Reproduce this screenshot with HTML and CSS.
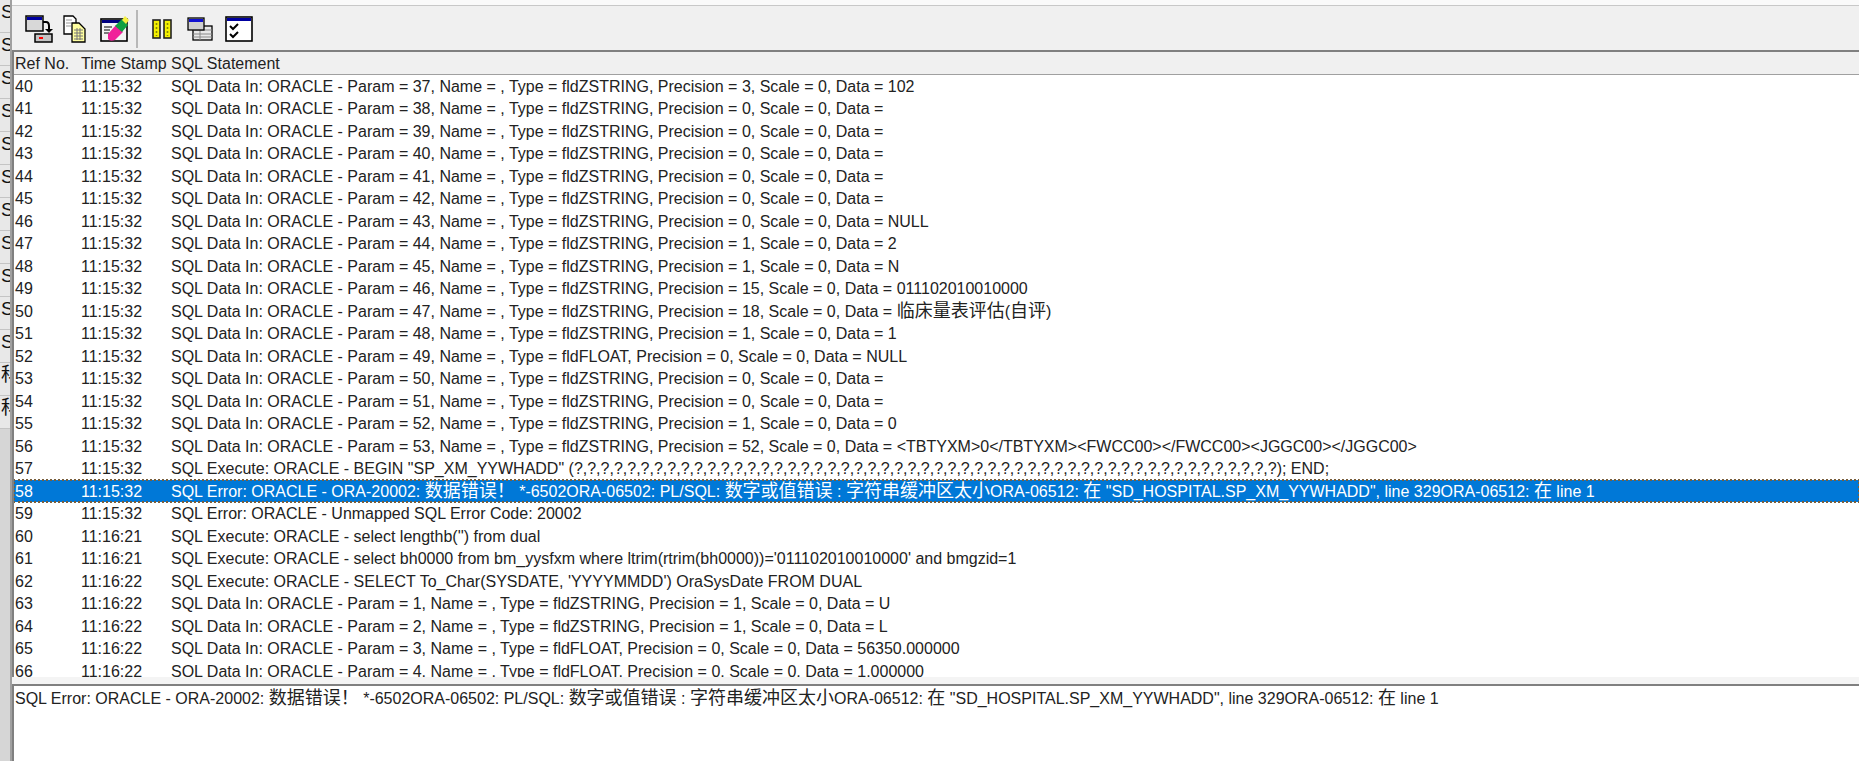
FILE: index.html
```html
<!DOCTYPE html>
<html lang="en">
<head>
<meta charset="utf-8">
<title>SQL Monitor</title>
<link rel="stylesheet" href="styles.css">
</head>
<body>
<div class="app">
  <div class="side">
    <span>S</span><span>S</span><span>S</span><span>S</span><span>S</span><span>S</span><span>S</span><span>S</span><span>S</span><span>S</span><span>S</span><span>科</span><span>科</span>
  </div>
  <div class="main">
    <div class="toolbar">
      <svg class="icon i1" viewBox="0 0 28 28"><rect x="1" y="1" width="17" height="15" fill="#d8d8d8" stroke="#000" stroke-width="1.5"/><rect x="2" y="2" width="15" height="3" fill="#0000a0"/><path d="M18 7h3q3 0 3 4v4" fill="none" stroke="#000" stroke-width="2"/><path d="M20 14h8l-4 4z" fill="#000"/><rect x="10" y="19" width="17" height="8" fill="#c4c4c4" stroke="#000" stroke-width="1.5"/><rect x="14" y="22" width="4" height="2" fill="#f00"/></svg>
      <svg class="icon i2" viewBox="0 0 24 28"><path d="M1 1h9l3 3v15H1z" fill="#fff" stroke="#000" stroke-width="1.3"/><path d="M3 5h6M3 8h5M3 11h5" stroke="#999"/><path d="M9 8h7l6 6v13H9z" fill="#ffffa0" stroke="#000" stroke-width="1.3"/><path d="M11 15h9M11 18h9M11 21h9M11 24h9M14 13v12M17 13v12" stroke="#777" stroke-width="1"/></svg>
      <svg class="icon i3" viewBox="0 0 30 28"><rect x="1" y="4" width="26" height="22" fill="#f4f4f4" stroke="#000" stroke-width="1.6"/><rect x="2" y="5" width="24" height="3" fill="#000080"/><path d="M4 12h8M4 15h6M4 18h5" stroke="#000" stroke-width="1.2"/><path d="M8 19l8-9 7 7-8 8q-5 2-7-1z" fill="#f0209a"/><path d="M15 11l7-7 6 6-6 7z" fill="#10a040"/><path d="M22 5l3-4 4 4-3 4z" fill="#f4f040"/></svg>
      <i class="sep"></i>
      <svg class="icon i4" viewBox="0 0 20 20"><rect x="1" y="1" width="7" height="18" fill="#f4f000" stroke="#222" stroke-width="1.6"/><rect x="12" y="1" width="7" height="18" fill="#f4f000" stroke="#222" stroke-width="1.6"/><path d="M4.500 4v13M15.500 4v13" stroke="#8a8a00" stroke-width="1.600" stroke-dasharray="2 2"/></svg>
      <svg class="icon i5" viewBox="0 0 26 24"><rect x="6" y="9" width="19" height="14" fill="#e8e8e8" stroke="#000" stroke-width="1.300"/><path d="M6 13h19M6 17h19M6 20h19M13 9v14" stroke="#888"/><rect x="1" y="1" width="16" height="12" fill="#cfcfcf" stroke="#000" stroke-width="1.300"/><rect x="2" y="2" width="14" height="3" fill="#1010d0"/></svg>
      <svg class="icon i6" viewBox="0 0 28 26"><rect x="1" y="1" width="26" height="24" fill="#fff" stroke="#000" stroke-width="1.600"/><rect x="2" y="2" width="24" height="3" fill="#0000a0"/><path d="M5 10l3 3 5-5M5 18l3 3 5-5" fill="none" stroke="#000" stroke-width="2"/></svg>
    </div>
    <div class="list">
      <div class="row head"><span class="c1">Ref No.</span><span class="c2">Time Stamp</span><span class="c3">SQL Statement</span></div>
      <div class="row"><span class="c1">40</span><span class="c2">11:15:32</span><span class="c3">SQL Data In: ORACLE - Param = 37, Name = , Type = fldZSTRING, Precision = 3, Scale = 0, Data = 102</span></div>
      <div class="row"><span class="c1">41</span><span class="c2">11:15:32</span><span class="c3">SQL Data In: ORACLE - Param = 38, Name = , Type = fldZSTRING, Precision = 0, Scale = 0, Data = </span></div>
      <div class="row"><span class="c1">42</span><span class="c2">11:15:32</span><span class="c3">SQL Data In: ORACLE - Param = 39, Name = , Type = fldZSTRING, Precision = 0, Scale = 0, Data = </span></div>
      <div class="row"><span class="c1">43</span><span class="c2">11:15:32</span><span class="c3">SQL Data In: ORACLE - Param = 40, Name = , Type = fldZSTRING, Precision = 0, Scale = 0, Data = </span></div>
      <div class="row"><span class="c1">44</span><span class="c2">11:15:32</span><span class="c3">SQL Data In: ORACLE - Param = 41, Name = , Type = fldZSTRING, Precision = 0, Scale = 0, Data = </span></div>
      <div class="row"><span class="c1">45</span><span class="c2">11:15:32</span><span class="c3">SQL Data In: ORACLE - Param = 42, Name = , Type = fldZSTRING, Precision = 0, Scale = 0, Data = </span></div>
      <div class="row"><span class="c1">46</span><span class="c2">11:15:32</span><span class="c3">SQL Data In: ORACLE - Param = 43, Name = , Type = fldZSTRING, Precision = 0, Scale = 0, Data = NULL</span></div>
      <div class="row"><span class="c1">47</span><span class="c2">11:15:32</span><span class="c3">SQL Data In: ORACLE - Param = 44, Name = , Type = fldZSTRING, Precision = 1, Scale = 0, Data = 2</span></div>
      <div class="row"><span class="c1">48</span><span class="c2">11:15:32</span><span class="c3">SQL Data In: ORACLE - Param = 45, Name = , Type = fldZSTRING, Precision = 1, Scale = 0, Data = N</span></div>
      <div class="row"><span class="c1">49</span><span class="c2">11:15:32</span><span class="c3">SQL Data In: ORACLE - Param = 46, Name = , Type = fldZSTRING, Precision = 15, Scale = 0, Data = 011102010010000</span></div>
      <div class="row"><span class="c1">50</span><span class="c2">11:15:32</span><span class="c3">SQL Data In: ORACLE - Param = 47, Name = , Type = fldZSTRING, Precision = 18, Scale = 0, Data = <span class="cjk">临床量表评估</span>(<span class="cjk">自评</span>)</span></div>
      <div class="row"><span class="c1">51</span><span class="c2">11:15:32</span><span class="c3">SQL Data In: ORACLE - Param = 48, Name = , Type = fldZSTRING, Precision = 1, Scale = 0, Data = 1</span></div>
      <div class="row"><span class="c1">52</span><span class="c2">11:15:32</span><span class="c3">SQL Data In: ORACLE - Param = 49, Name = , Type = fldFLOAT, Precision = 0, Scale = 0, Data = NULL</span></div>
      <div class="row"><span class="c1">53</span><span class="c2">11:15:32</span><span class="c3">SQL Data In: ORACLE - Param = 50, Name = , Type = fldZSTRING, Precision = 0, Scale = 0, Data = </span></div>
      <div class="row"><span class="c1">54</span><span class="c2">11:15:32</span><span class="c3">SQL Data In: ORACLE - Param = 51, Name = , Type = fldZSTRING, Precision = 0, Scale = 0, Data = </span></div>
      <div class="row"><span class="c1">55</span><span class="c2">11:15:32</span><span class="c3">SQL Data In: ORACLE - Param = 52, Name = , Type = fldZSTRING, Precision = 1, Scale = 0, Data = 0</span></div>
      <div class="row"><span class="c1">56</span><span class="c2">11:15:32</span><span class="c3">SQL Data In: ORACLE - Param = 53, Name = , Type = fldZSTRING, Precision = 52, Scale = 0, Data = &lt;TBTYXM&gt;0&lt;/TBTYXM&gt;&lt;FWCC00&gt;&lt;/FWCC00&gt;&lt;JGGC00&gt;&lt;/JGGC00&gt;</span></div>
      <div class="row"><span class="c1">57</span><span class="c2">11:15:32</span><span class="c3">SQL Execute: ORACLE - BEGIN "SP_XM_YYWHADD" (?,?,?,?,?,?,?,?,?,?,?,?,?,?,?,?,?,?,?,?,?,?,?,?,?,?,?,?,?,?,?,?,?,?,?,?,?,?,?,?,?,?,?,?,?,?,?,?,?,?,?,?,?); END;</span></div>
      <div class="row sel"><span class="c1">58</span><span class="c2">11:15:32</span><span class="c3">SQL Error: ORACLE - ORA-20002: <span class="cjk">数据错误！</span> *-6502ORA-06502: PL/SQL: <span class="cjk">数字或值错误</span> : <span class="cjk">字符串缓冲区太小</span>ORA-06512: <span class="cjk">在</span> "SD_HOSPITAL.SP_XM_YYWHADD", line 329ORA-06512: <span class="cjk">在</span> line 1</span></div>
      <div class="row"><span class="c1">59</span><span class="c2">11:15:32</span><span class="c3">SQL Error: ORACLE - Unmapped SQL Error Code: 20002</span></div>
      <div class="row"><span class="c1">60</span><span class="c2">11:16:21</span><span class="c3">SQL Execute: ORACLE - select lengthb('') from dual</span></div>
      <div class="row"><span class="c1">61</span><span class="c2">11:16:21</span><span class="c3">SQL Execute: ORACLE - select bh0000 from bm_yysfxm where ltrim(rtrim(bh0000))='011102010010000' and bmgzid=1</span></div>
      <div class="row"><span class="c1">62</span><span class="c2">11:16:22</span><span class="c3">SQL Execute: ORACLE - SELECT To_Char(SYSDATE, 'YYYYMMDD') OraSysDate FROM DUAL</span></div>
      <div class="row"><span class="c1">63</span><span class="c2">11:16:22</span><span class="c3">SQL Data In: ORACLE - Param = 1, Name = , Type = fldZSTRING, Precision = 1, Scale = 0, Data = U</span></div>
      <div class="row"><span class="c1">64</span><span class="c2">11:16:22</span><span class="c3">SQL Data In: ORACLE - Param = 2, Name = , Type = fldZSTRING, Precision = 1, Scale = 0, Data = L</span></div>
      <div class="row"><span class="c1">65</span><span class="c2">11:16:22</span><span class="c3">SQL Data In: ORACLE - Param = 3, Name = , Type = fldFLOAT, Precision = 0, Scale = 0, Data = 56350.000000</span></div>
      <div class="row"><span class="c1">66</span><span class="c2">11:16:22</span><span class="c3">SQL Data In: ORACLE - Param = 4, Name = , Type = fldFLOAT, Precision = 0, Scale = 0, Data = 1.000000</span></div>
    </div>
    <div class="split"></div>
    <div class="detail">SQL Error: ORACLE - ORA-20002: <span class="cjk">数据错误！</span> *-6502ORA-06502: PL/SQL: <span class="cjk">数字或值错误</span> : <span class="cjk">字符串缓冲区太小</span>ORA-06512: <span class="cjk">在</span> "SD_HOSPITAL.SP_XM_YYWHADD", line 329ORA-06512: <span class="cjk">在</span> line 1</div>
  </div>
</div>
</body>
</html>
```
FILE: styles.css
```css
* { box-sizing: border-box; }
html, body { margin: 0; height: 100%; overflow: hidden; background: #fff; }
body { font: 16px/24.5px "Liberation Sans", "Noto Sans CJK SC", sans-serif; color: #222; }
.app { display: flex; height: 761px; }
.side { width: 10px; flex: none; display: flex; flex-direction: column; overflow: hidden; background: #d6d6d6; }
.side span { height: 33px; flex: none; padding-left: 1px; font-size: 19px; line-height: 24px; background: #e8e8e8; border-bottom: 1px solid #c4c4c4; color: #111; white-space: nowrap; overflow: hidden; }
.main { flex: 1; min-width: 0; display: flex; flex-direction: column; padding-top: 5px; background: #fafafa; border-left: 2px solid #a0a0a0; }
.toolbar { height: 45px; flex: none; display: flex; align-items: center; padding: 2px 0 0 13px; background: #f0f0f0; border-top: 1px solid #c8c8c8; }
.icon { flex: none; display: block; }
.i1 { width: 28px; height: 28px; }
.i2 { width: 24px; height: 28px; margin-left: 10px; }
.i3 { width: 30px; height: 28px; margin-left: 13px; }
.sep { width: 2px; height: 38px; background: #b8b8b8; margin: 0 14px 0 6px; }
.i4 { width: 20px; height: 20px; }
.i5 { width: 26px; height: 24px; margin-left: 15px; }
.i6 { width: 28px; height: 26px; margin-left: 12px; }
.list { height: 627px; flex: none; overflow: hidden; background: #fff; border-top: 2px solid #808080; border-left: 2px solid #808080; }
.row { display: flex; height: 22.5px; white-space: nowrap; }
.head { background: #f0f0f0; border-bottom: 1px solid #a0a0a0; }
.c1 { width: 67px; padding-left: 1px; flex: none; }
.c2 { width: 90px; flex: none; }
.c3 { flex: 1; }
.cjk { font-size: 18px; line-height: 20px; }
.sel { background: #0078d7; color: #fff; outline: 2px dotted #7a5f3c; outline-offset: -1px; }
.split { height: 9px; flex: none; background: #f4f4f4; border-bottom: 2px solid #808080; }
.detail { flex: 1; padding: 1px 0 0 1px; background: #fff; border-left: 2px solid #808080; white-space: nowrap; }
```
